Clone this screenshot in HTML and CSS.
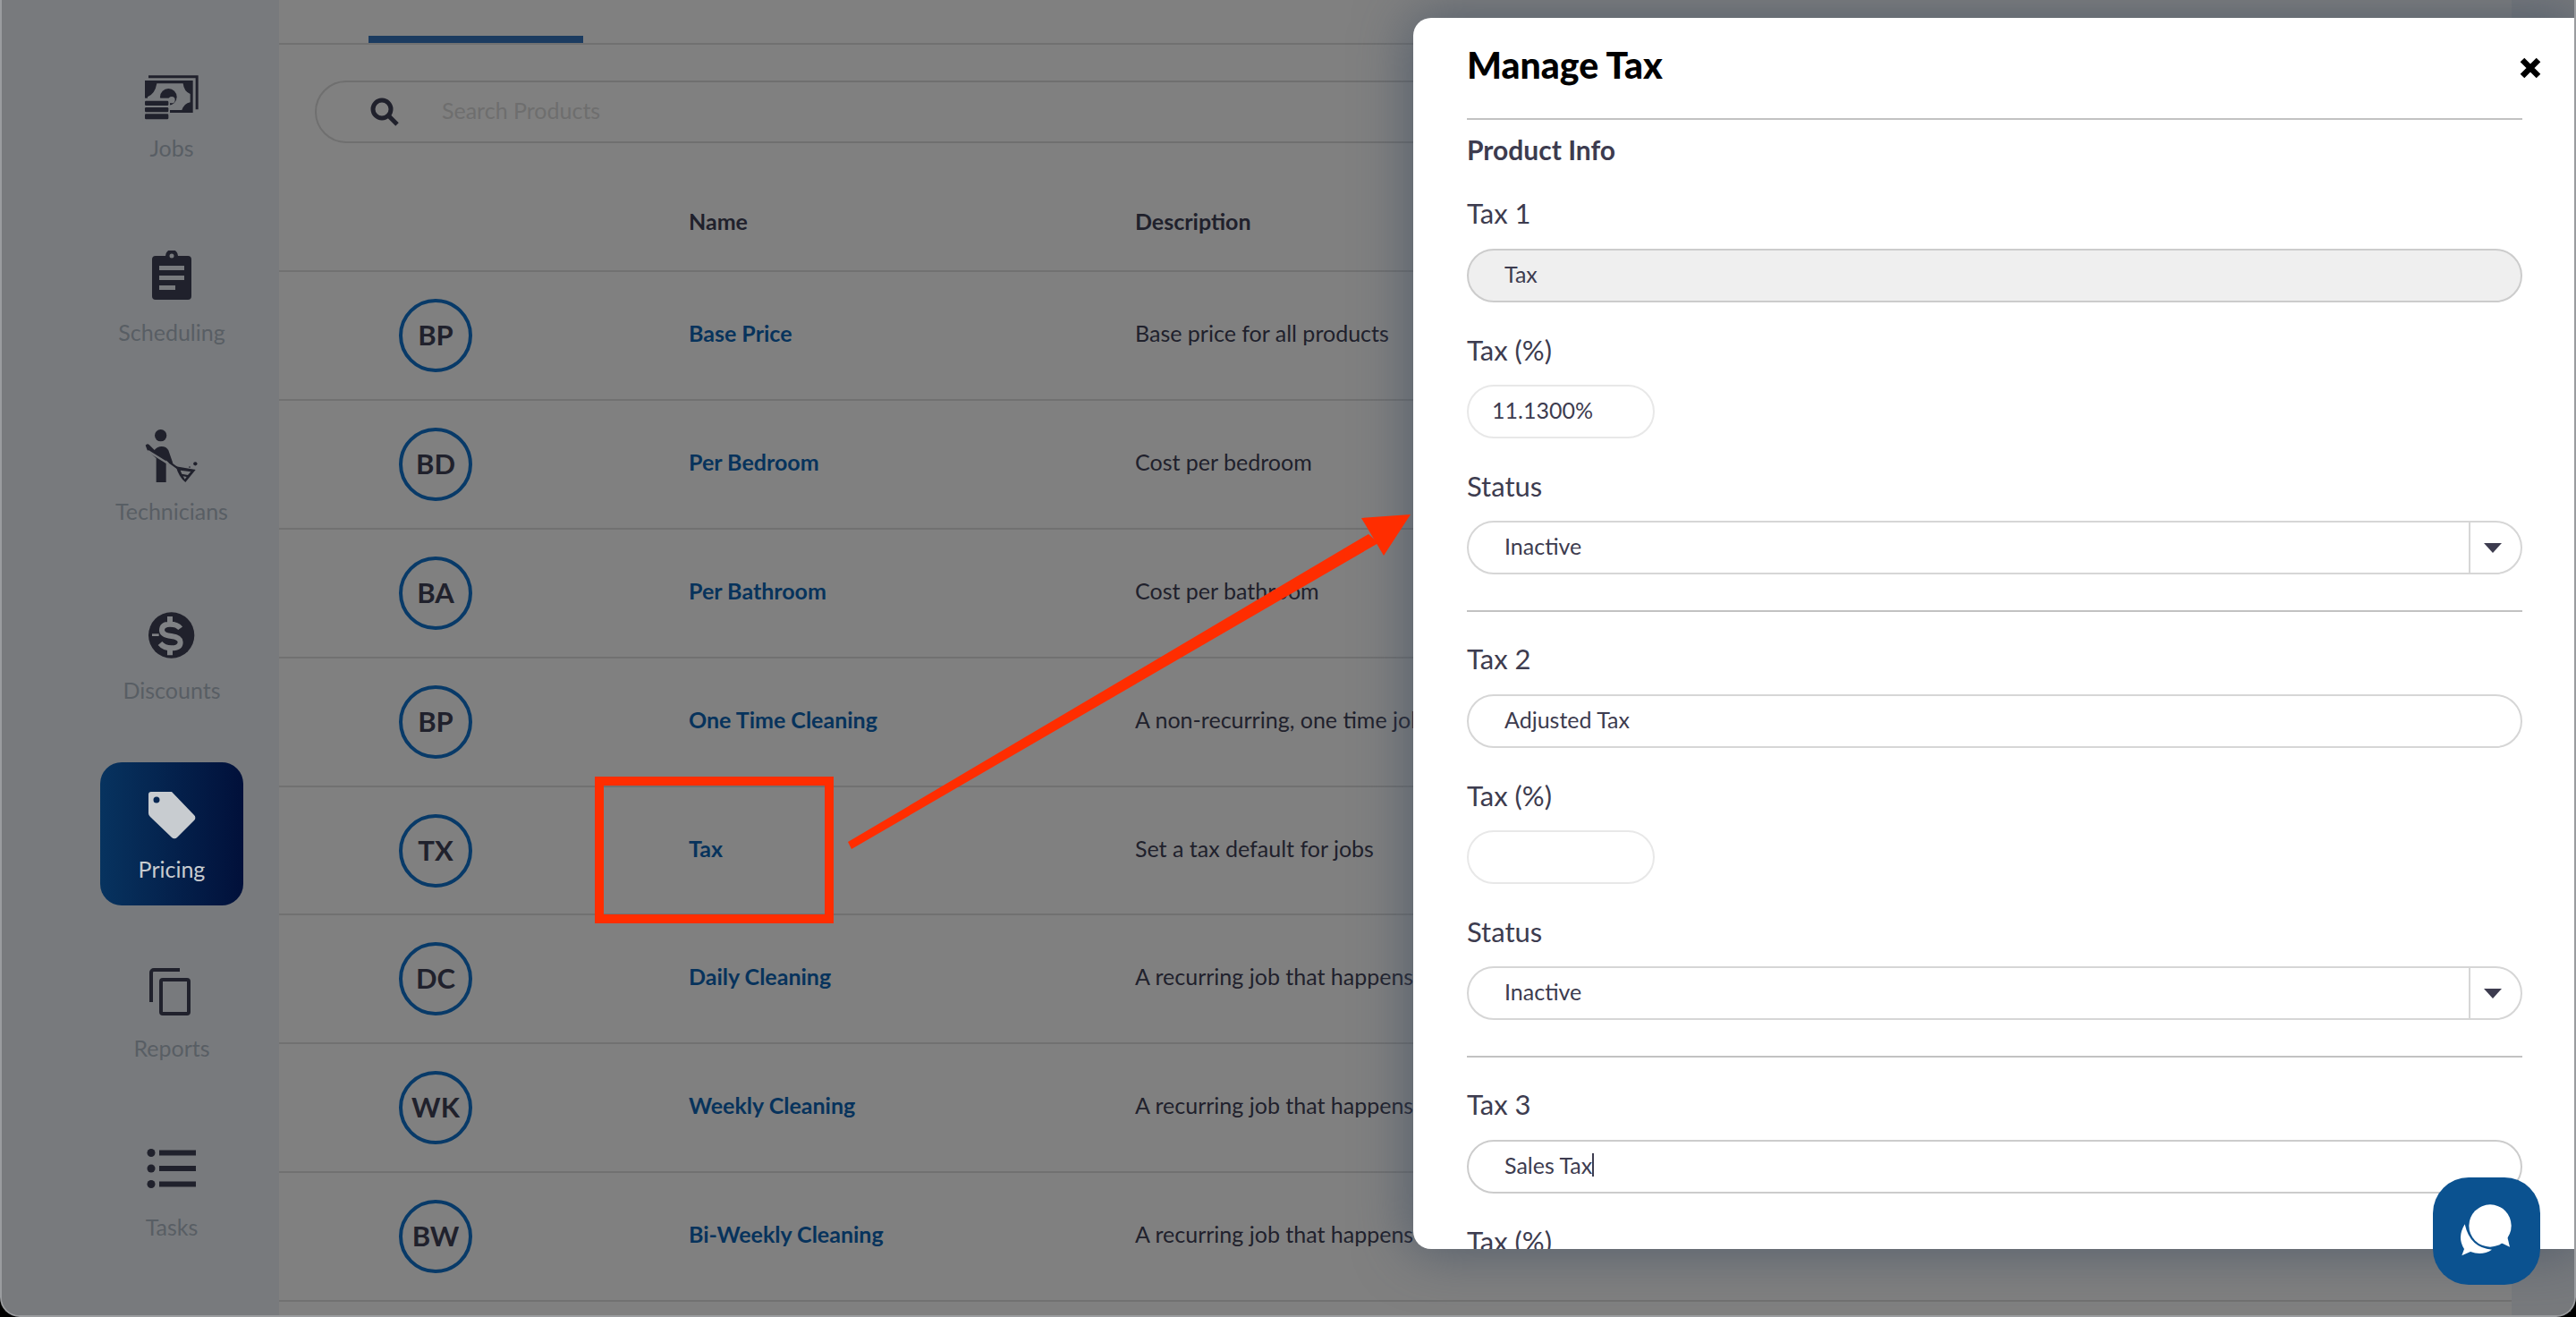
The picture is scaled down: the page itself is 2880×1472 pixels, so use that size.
FILE: index.html
```html
<!DOCTYPE html>
<html lang="en">
<head>
<meta charset="utf-8">
<title>Manage Tax</title>
<link rel="stylesheet" href="styles.css">
</head>
<body>
<div class="window">
  <nav class="sidebar">
    <a class="nav-item nav-jobs">
      <svg class="nav-icon" viewBox="0 0 80 64"><g transform="translate(-2 -5) scale(.3333)"><path fill="#20212c" d="M48 28H215V142h-9V37H48z"/><rect x="36" y="45" width="161" height="108" fill="#20212c"/><path fill="#787a7d" d="M76 55H164Q167 82 188 90V118Q168 122 160 144H115V105H45V100Q70 90 76 55z"/><circle cx="115" cy="100" r="28" fill="#20212c"/><circle cx="126" cy="110" r="11" fill="#787a7d"/><rect x="28" y="104" width="92" height="78" fill="#787a7d"/><rect x="36" y="113" width="79" height="16" rx="4" fill="#20212c"/><rect x="36" y="135" width="79" height="16" rx="4" fill="#20212c"/><rect x="36" y="157" width="79" height="18" rx="4" fill="#20212c"/></g></svg>
      <span class="nav-label">Jobs</span>
    </a>
    <a class="nav-item">
      <svg class="nav-icon" viewBox="0 0 80 64"><path fill="#20212c" fill-rule="evenodd" d="M22 6h11a7 7 0 0 1 14 0h11a4 4 0 0 1 4 4v41a4 4 0 0 1-4 4H22a4 4 0 0 1-4-4V10a4 4 0 0 1 4-4zM40 3.500a2.500 2.500 0 1 0 0 5 2.500 2.500 0 0 0 0-5zM26 17v5h28v-5zM26 28v5h28v-5zM26 39v5h18v-5z"/></svg>
      <span class="nav-label">Scheduling</span>
    </a>
    <a class="nav-item">
      <svg class="nav-icon" viewBox="0 0 80 64"><g transform="translate(-2 -5) scale(.3333)"><circle cx="89" cy="35" r="20" fill="#20212c"/><path fill="#20212c" d="M38 68Q44 60 50 66L68 84Q78 72 92 72Q108 72 115 85L130 128L118 130L107 118V192H74V112L44 84z"/><path stroke="#787a7d" stroke-width="7" fill="none" d="M46 87L128 138"/><path stroke="#20212c" stroke-width="7" fill="none" d="M118 125L146 145"/><path fill="#20212c" d="M140 139L206 150L172 192Q150 175 140 139z"/><path fill="#787a7d" d="M155 152L190 157L180 168L160 164zM164 172L176 174L170 182z"/><circle cx="205" cy="130" r="6.500" fill="#20212c"/><circle cx="186" cy="141" r="2.500" fill="#20212c"/></g></svg>
      <span class="nav-label">Technicians</span>
    </a>
    <a class="nav-item">
      <svg class="nav-icon" viewBox="0 0 80 64"><g transform="translate(3 -5) scale(.3333)"><circle cx="110" cy="105" r="77" fill="#20212c"/><path fill="none" stroke="#808285" stroke-width="18" d="M140 82Q130 68 105 68Q78 68 78 88Q78 105 110 108Q140 112 140 128Q140 148 110 148Q85 148 72 132M105 42V68M105 148V172"/><rect x="45" y="100" width="23" height="8" fill="#808285"/></g></svg>
      <span class="nav-label">Discounts</span>
    </a>
    <a class="nav-item nav-active">
      <svg class="nav-icon" viewBox="0 0 80 64"><path fill="#c8ccd0" fill-rule="evenodd" d="M17 5H40L65 31a4 4 0 0 1 0 6L46 56a4 4 0 0 1-6 0L16 33a5 5 0 0 1-2-4V8a3 3 0 0 1 3-3zM23 10.500a3.500 3.500 0 1 0 0 7 3.500 3.500 0 0 0 0-7z"/></svg>
      <span class="nav-label">Pricing</span>
    </a>
    <a class="nav-item">
      <svg class="nav-icon" viewBox="0 0 80 64"><g fill="none" stroke="#20212c" stroke-width="4"><path d="M49 4H20a3 3 0 0 0-3 3v33"/><rect x="28" y="15" width="31" height="38" rx="2"/></g></svg>
      <span class="nav-label">Reports</span>
    </a>
    <a class="nav-item">
      <svg class="nav-icon" viewBox="0 0 80 64"><g fill="#20212c"><circle cx="17" cy="8.500" r="4.500"/><circle cx="17" cy="26" r="4.500"/><circle cx="17" cy="43.500" r="4.500"/><rect x="26" y="5.500" width="41" height="6"/><rect x="26" y="23" width="41" height="6"/><rect x="26" y="40.500" width="41" height="6"/></g></svg>
      <span class="nav-label">Tasks</span>
    </a>
  </nav>

  <main class="main">
    <div class="tabs"><span class="tab-active"></span></div>
    <div class="search">
      <svg class="search-icon" viewBox="0 0 32 32"><circle cx="13" cy="13" r="10" fill="none" stroke="#20212c" stroke-width="5"/><path d="M20 20l10 10" stroke="#20212c" stroke-width="5"/></svg>
      <span class="search-placeholder">Search Products</span>
    </div>
    <div class="table-head"><span class="head-name">Name</span><span>Description</span></div>
    <div class="row"><span class="avatar">BP</span><span class="name">Base Price</span><span class="desc">Base price for all products</span></div>
    <div class="row"><span class="avatar">BD</span><span class="name">Per Bedroom</span><span class="desc">Cost per bedroom</span></div>
    <div class="row"><span class="avatar">BA</span><span class="name">Per Bathroom</span><span class="desc">Cost per bathroom</span></div>
    <div class="row"><span class="avatar">BP</span><span class="name">One Time Cleaning</span><span class="desc">A non-recurring, one time job</span></div>
    <div class="row"><span class="avatar">TX</span><span class="name">Tax</span><span class="desc">Set a tax default for jobs</span></div>
    <div class="row"><span class="avatar">DC</span><span class="name">Daily Cleaning</span><span class="desc">A recurring job that happens daily</span></div>
    <div class="row"><span class="avatar">WK</span><span class="name">Weekly Cleaning</span><span class="desc">A recurring job that happens weekly</span></div>
    <div class="row"><span class="avatar">BW</span><span class="name">Bi-Weekly Cleaning</span><span class="desc">A recurring job that happens every two weeks</span></div>
  </main>
  <div class="scroll-strip"></div>

  <section class="modal">
    <header class="modal-head">
      <h1 class="modal-title">Manage Tax</h1>
      <svg class="modal-close" viewBox="0 0 24 24"><path d="M3 3l18 18M21 3L3 21" stroke="#000" stroke-width="6.500"/></svg>
    </header>
    <div class="modal-body">
      <hr class="rule rule-top">
      <h2 class="section-title">Product Info</h2>

      <div class="tax-group">
        <label class="field-label">Tax 1</label>
        <div class="field field-disabled">Tax</div>
        <label class="field-label spaced">Tax (%)</label>
        <div class="field field-short">11.1300%</div>
        <label class="field-label spaced">Status</label>
        <div class="field field-select">Inactive<span class="select-btn"><span class="caret"></span></span></div>
      </div>
      <hr class="rule">
      <div class="tax-group">
        <label class="field-label">Tax 2</label>
        <div class="field">Adjusted Tax</div>
        <label class="field-label spaced">Tax (%)</label>
        <div class="field field-short"></div>
        <label class="field-label spaced">Status</label>
        <div class="field field-select">Inactive<span class="select-btn"><span class="caret"></span></span></div>
      </div>
      <hr class="rule">
      <div class="tax-group">
        <label class="field-label">Tax 3</label>
        <div class="field field-focus">Sales Tax<span class="cursor"></span></div>
        <label class="field-label spaced">Tax (%)</label>
      </div>
    </div>
  </section>

  <div class="annotation-box"></div>
  <svg class="annotation-arrow" viewBox="0 0 640 390"><path fill="#ff2d00" d="M0 366L582 22 593 32 4 374z"/><path fill="#ff2d00" d="M629 0L574 4 599 46z"/></svg>

  <button class="chat-btn" aria-label="Chat">
    <svg viewBox="0 0 300 270" class="chat-icon"><g fill="#fff"><circle cx="162" cy="120" r="71"/><path d="M200 178L228 191 218 150z"/><path d="M77 115Q50 160 75 198L67 220 96 207Q135 222 168 200 95 195 77 115z"/></g></svg>
  </button>
</div>
</body>
</html>
```

FILE: styles.css
```css
* { box-sizing: border-box; }
html, body { margin: 0; padding: 0; background: #000; }
body { width: 2880px; height: 1472px; overflow: hidden; font-family: "Lato", "Liberation Sans", sans-serif; }

.window {
  position: relative;
  display: flex;
  width: 2880px;
  height: 1472px;
  overflow: hidden;
  background: #808080;
  border-radius: 0 0 22px 22px;
  border-left: 2px solid #9a9c9f;
  border-bottom: 2px solid #9a9c9f;
  border-right: 2px solid #9a9c9f;
}

/* Sidebar */
.sidebar {
  flex: 0 0 310px;
  display: flex;
  flex-direction: column;
  align-items: flex-start;
  gap: 40px;
  padding: 52px 0 0 110px;
  background: #787a7d;
}
.nav-item {
  width: 160px;
  height: 160px;
  flex: none;
  display: flex;
  flex-direction: column;
  align-items: center;
  padding-top: 28px;
  color: #585e64;
  border-radius: 24px;
}
.nav-icon { width: 80px; height: 64px; flex: none; }
.nav-label { font-size: 25px; line-height: 40px; margin-top: 7px; }
.nav-jobs .nav-label { margin-top: 1px; }
.nav-active { background: linear-gradient(90deg, #07335f, #01103a); color: #c8ccd0; }

/* Main list */
.main { flex: 1 1 auto; min-width: 0; display: flex; flex-direction: column; }
.tabs { flex: none; height: 50px; border-bottom: 2px solid #717171; padding-left: 100px; display: flex; align-items: flex-end; }
.tab-active { width: 240px; height: 8px; background: #1b3b60; }
.search {
  flex: none;
  display: flex;
  align-items: center;
  width: 2300px;
  height: 70px;
  margin: 40px 0 0 40px;
  padding-left: 60px;
  border: 2px solid #6f6f6f;
  border-radius: 35px;
}
.search-icon { width: 32px; height: 32px; flex: none; }
.search-placeholder { margin-left: 48px; padding-bottom: 4px; font-size: 25px; color: #6e6e6e; }
.table-head {
  flex: none;
  display: grid;
  grid-template-columns: 499px 1fr;
  height: 144px;
  padding: 70px 0 0 458px;
  border-bottom: 2px solid #717171;
  font-size: 25px;
  line-height: 34px;
  font-weight: 700;
  color: #20212c;
}
.row {
  flex: none;
  display: grid;
  grid-template-columns: 458px 499px 1fr;
  align-items: center;
  height: 143.9px;
  border-bottom: 2px solid #717171;
  font-size: 25px;
}
.avatar {
  display: flex;
  align-items: center;
  justify-content: center;
  width: 82px;
  height: 82px;
  margin-left: 134px;
  padding-bottom: 2px;
  border: 4px solid #083a68;
  border-radius: 50%;
  font-size: 31px;
  font-weight: 700;
  color: #20212c;
}
.name { padding-bottom: 6px; font-weight: 700; color: #07335c; }
.desc { padding-bottom: 6px; color: #20212c; white-space: nowrap; }
.scroll-strip { flex: 0 0 70px; background: #787a7d; }

/* Modal */
.modal {
  position: absolute;
  left: 1578px;
  top: 20px;
  width: 1298px;
  height: 1376px;
  overflow: hidden;
  background: #fff;
  border-radius: 20px 0 0 20px;
  box-shadow: 0 0 60px 4px rgba(60, 75, 95, .65);
  padding: 0 58px 0 60px;
  color: #3d3c4f;
}
.modal-head { display: flex; justify-content: space-between; align-items: center; height: 112px; margin-right: -21px; }
.modal-title { margin: 0; padding-bottom: 6px; font-size: 41px; line-height: 50px; font-weight: 900; color: #000; }
.modal-close { width: 24px; height: 24px; flex: none; }
.modal-body { display: flex; flex-direction: column; }
.rule { width: 100%; height: 2px; margin: 40px 0 34px; border: 0; background: #c2c2c2; flex: none; }
.rule-top { margin: 0 0 15px; }
.section-title { margin: 0 0 31px; height: 40px; font-size: 30px; line-height: 36px; font-weight: 700; }
.tax-group { display: flex; flex-direction: column; flex: none; }
.field-label { height: 40px; font-size: 31px; line-height: 36px; margin-bottom: 18px; }
.spaced { margin-top: 35px; margin-bottom: 17px; }
.field {
  position: relative;
  display: flex;
  align-items: center;
  flex: none;
  height: 60px;
  padding: 0 0 5px 40px;
  border: 2px solid #d6d6d6;
  border-radius: 30px;
  font-size: 25px;
  color: #3d3c4f;
}
.field-disabled { background: #efefef; border-color: #cccccc; }
.field-short { width: 210px; padding-left: 26px; border-color: #e8e8e8; }
.field-focus { border-color: #cccccc; }
.select-btn {
  margin: 0 0 -5px auto;
  display: flex;
  align-items: center;
  justify-content: center;
  width: 58px;
  height: calc(100% + 5px);
  padding-right: 6px;
  border-left: 2px solid #d6d6d6;
}
.caret { width: 0; height: 0; border: 10px solid transparent; border-top: 11px solid #3d3c4f; border-bottom: 0; }
.cursor { display: inline-block; width: 2px; height: 26px; background: #3d3c4f; }

/* Annotation drawn over the screenshot */
.annotation-box { position: absolute; left: 663px; top: 868px; width: 267px; height: 164px; border: 10px solid #ff2d00; }
.annotation-arrow { position: absolute; left: 946px; top: 575px; width: 640px; height: 390px; overflow: visible; }

/* Chat launcher */
.chat-btn {
  position: absolute;
  left: 2718px;
  top: 1316px;
  width: 120px;
  height: 120px;
  display: flex;
  align-items: center;
  justify-content: center;
  padding: 0 0 2px;
  border: 0;
  border-radius: 40px;
  background: #0b5290;
}
.chat-icon { width: 100px; height: 90px; }
```
